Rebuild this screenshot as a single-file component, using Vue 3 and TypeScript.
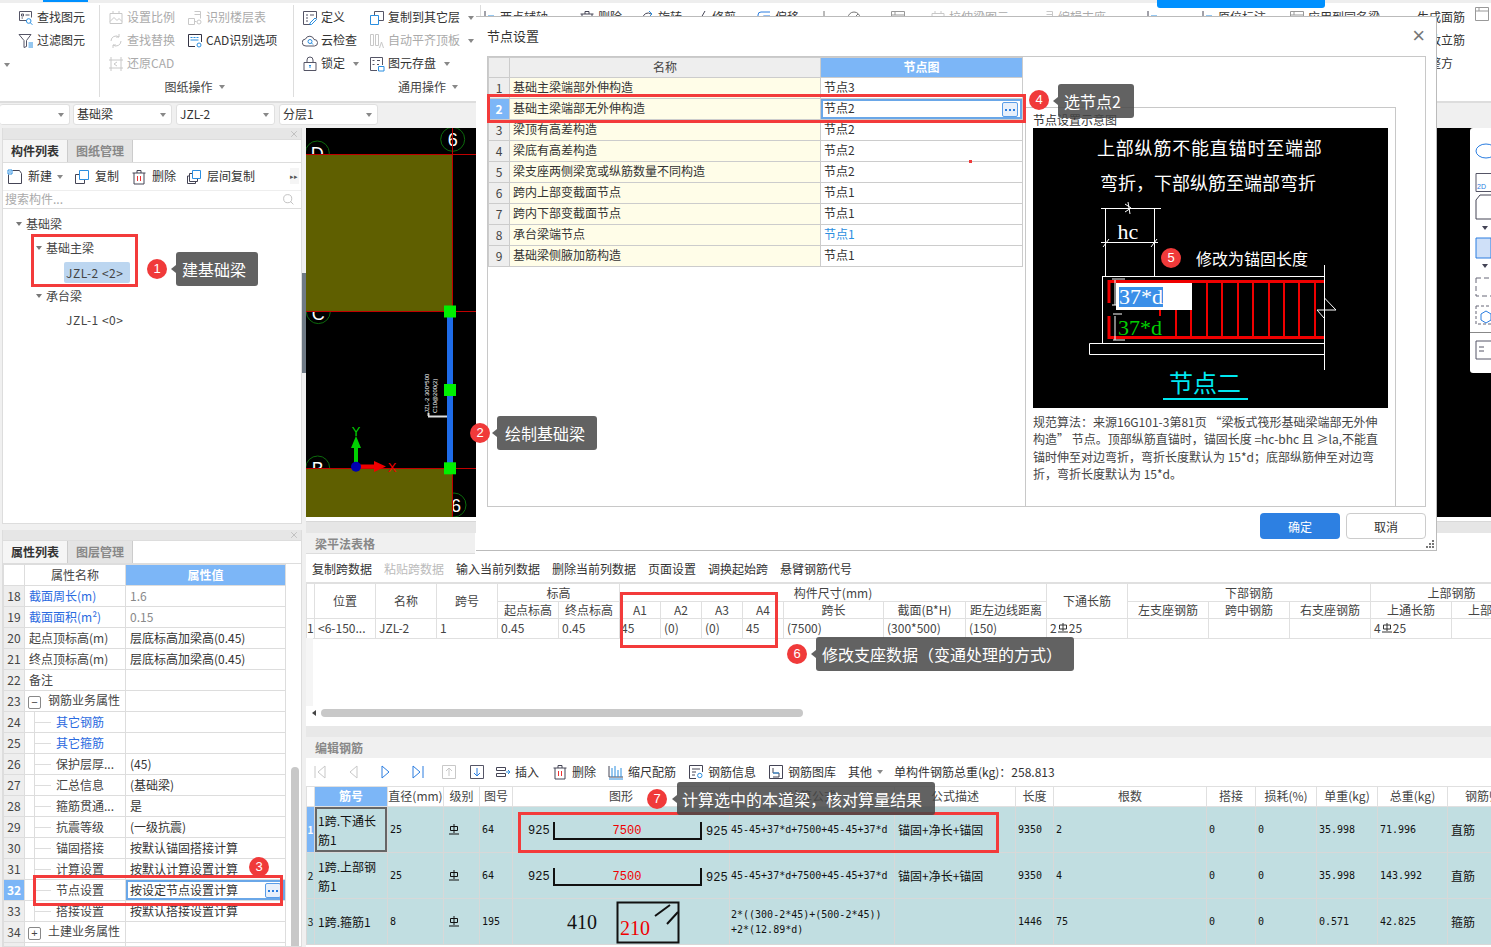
<script setup lang="ts">
import { h } from 'vue'
import type { FunctionalComponent } from 'vue'

const BOX = 'M1.5 1.5h13v13h-13z'
const ICONS: Record<string, string[]> = {
  find: ['#556|M8 10.5H1.5v-9h12v6', '#556|M3.5 4h2v2h-2zM3.5 8h1.5M7.5 5h4', '#2a8ee0|M13 11a2.3 2.3 0 1 1-4.6 0 2.3 2.3 0 0 1 4.6 0zM12.4 12.8l2 2'],
  filter: ['#556|M1 1.5h12L8.500 7.500v6L6 14.500v-7z', '#2a8ee0|M10.500 10h4.500M10.500 12h4.500M10.500 14h4.500'],
  scale: ['#c8c8c8|M2 3.500h12v10H2zM2 11.500l4-4 3 3 2-2 3 3M5 1v2.500M11 1v2.500'],
  floor: ['#c8c8c8|M1.500 8.500h6v6h-6zM7.500 1.500h6v7M7.500 4.500h6M7.500 11.500h2', '#c8c8c8|M14 12a2 2 0 1 1-4 0 2 2 0 0 1 4 0z'],
  replace: ['#c8c8c8|M3 8a5 5 0 0 1 8-4M13 8a5 5 0 0 1-8 4M11 1v3H8M5 15v-3h3'],
  cad: ['#334|M8 13.500H1.500v-12h13V9', '#2a8ee0|M3.500 4.500h2M6.500 4.500h2M9.500 4.500h2M3.500 7h8M14 12a2 2 0 1 1-4 0 2 2 0 0 1 4 0z'],
  restore: ['#c8c8c8|M3 1v14M1 4h14M1 12h14M13 1v14M9 6 6 8l3 2'],
  define: ['#556|M1.500 1.500h13v7M8 14.500H1.500v-13M4 5h2M8 5h4M4 8h2M4 11h2', '#2a8ee0|M8 13l5-5 1.500 1.500-5 5H8z'],
  copyl: ['#2a8ee0|M1.500 5.500h8v9h-8z', '#556|M5.500 5V1.500h9v9H10'],
  cloud: ['#556|M4 13a3.500 3.500 0 0 1-.500-7A4.500 4.500 0 0 1 12 6.500 3.200 3.200 0 0 1 12.500 13z', '#2a8ee0|M10 8.500a2 2 0 1 1-4 0 2 2 0 0 1 4 0zM9.500 10l1.500 1.500'],
  align: ['#c8c8c8|M1.500 1.500h3v11h-3zM6.500 1.500h3v11h-3zM10.500 15l2-6 2 6'],
  lock: ['#556|M2 6.500h12v8H2zM5 6.500V4a3 3 0 0 1 6 0v2.500', '#2a8ee0|M8 9v3M7 10l1-1 1 1'],
  store: ['#556|M8 14.500H1.500v-13h12V9M3.500 4.500h2M3.500 8.500h2M8 4.500h3M8 8.500h2', '#2a8ee0|M9.500 10.500h5.500v4.500H9.500z'],
  create: ['#445|M5.500 1.500h7l2 3v10h-13v-9', '#2a8ee0|M1 1h4v4H1zM2 3h2'],
  copy: ['#2a8ee0|M5.500 1.500h9v9h-9z', '#445|M5 5.500H1.500v9h9V11'],
  del: ['#445|M3 4v11h10V4M1.500 4h13M6 4V1.500h4V4', '#e33|M6.500 7v5M9.500 7v5'],
  fcopy: ['#2a8ee0|M6.500 1.500h8v8h-8z', '#445|M6 4.500H3.500v8h8V10M3 7H1.500v7.500h8V13'],
  search: ['#b5b5b5|M12 7a5 5 0 1 1-10 0 5 5 0 0 1 10 0zM10.500 10.500l3.500 3.500'],
  first: ['#c8c8c8|M3 2v12M13 2 6 8l7 6z'],
  prev: ['#c8c8c8|M11 2 4 8l7 6z'],
  next: ['#2a7de0|M5 2l7 6-7 6z'],
  last: ['#2a7de0|M3 2l7 6-7 6zM13 2v12'],
  upb: ['#c8c8c8|' + BOX + 'M8 12V4M5 7l3-3 3 3'],
  dnb: ['#556|' + BOX, '#2a7de0|M8 4v8M5 9l3 3 3-3'],
  ins: ['#445|M1.500 3.500h9v3h-9zM1.500 9.500h9v3h-9z', '#2a8ee0|M11 8h4M13 6l2 2-2 2'],
  bars: ['#445|M1 2v11h14', '#2a8ee0|M4 4v9M7 2v11M10 6v7M13 4v9M1 15h14'],
  info: ['#445|M8 14.500H1.500v-13h13V8M4 5h8M4 8h4M4 11h3', '#2a8ee0|M14 11.500a2.200 2.200 0 1 1-4.400 0 2.200 2.200 0 0 1 4.400 0z'],
  lib: ['#445|' + BOX + 'M5 4v5h6v4H5', '#2a8ee0|M5 9h6'],
  mark: ['#445|M4 1v12M1 13h14', '#2a8ee0|M7 6h6'],
  box: ['#999|' + BOX + 'M1.500 5h13M5 1.500V5'],
  rot: ['#445|M4 14V8a5 5 0 0 1 8-4', '#2a8ee0|M10 1l3 3-3 3'],
  trim: ['#445|M4 15 12 1M1 8h3'],
  off: ['#2a7de0|M14 2H5a3 3 0 0 0-3 3v9M14 6H8a2 2 0 0 0-2 2v6'],
  circ: ['#777|M14 8a6 6 0 1 1-12 0 6 6 0 0 1 12 0zM4 12l8-8'],
  tick: ['#777|M8 1v9M8 13v2'],
  close: ['#aaa|M3.500 3.500l9 9M12.500 3.500l-9 9']
}

const Ico: FunctionalComponent<{ n: string; s?: number }> = (p) =>
  h(
    'svg',
    { class: 'ico', width: p.s || 16, height: p.s || 16, viewBox: '0 0 16 16', fill: 'none' },
    (ICONS[p.n] || []).map((e) => {
      const [c, d] = e.split('|')
      return h('path', { d, stroke: c, 'stroke-width': 1 })
    })
  )

const topRest = [
  { w: 98, i: 'mark', t: '两点辅轴' },
  { w: 60, i: 'del', t: '删除' },
  { w: 54, i: 'rot', t: '旋转' },
  { w: 63, i: 'trim', t: '修剪' },
  { w: 60, i: 'off', t: '偏移' },
  { w: 30, i: 'tick', t: '' },
  { w: 44, i: 'circ', t: '' },
  { w: 40, i: 'box', t: '' },
  { w: 109, i: 'scale', t: '拉伸梁图元', g: true },
  { w: 105, i: 'floor', t: '编辑支座', g: true },
  { w: 55, i: 'mark', t: '' },
  { w: 90, i: 'mark', t: '原位标注' },
  { w: 103, i: 'box', t: '应用到同名梁' }
]

const tree = [
  { l: 0, t: '基础梁', caret: true },
  { l: 1, t: '基础主梁', caret: true },
  { l: 2, t: 'JZL-2 <2>', sel: true },
  { l: 1, t: '承台梁', caret: true },
  { l: 2, t: 'JZL-1 <0>' }
]

type Prop = { n: number; name: string; val?: string; blue?: boolean; gray?: boolean; child?: boolean; box?: string; sel?: boolean }
const props: Prop[] = [
  { n: 18, name: '截面周长(m)', val: '1.6', blue: true, gray: true },
  { n: 19, name: '截面面积(m²)', val: '0.15', blue: true, gray: true },
  { n: 20, name: '起点顶标高(m)', val: '层底标高加梁高(0.45)' },
  { n: 21, name: '终点顶标高(m)', val: '层底标高加梁高(0.45)' },
  { n: 22, name: '备注', val: '' },
  { n: 23, name: '钢筋业务属性', val: '', box: '−' },
  { n: 24, name: '其它钢筋', val: '', blue: true, child: true },
  { n: 25, name: '其它箍筋', val: '', blue: true, child: true },
  { n: 26, name: '保护层厚...', val: '(45)', child: true },
  { n: 27, name: '汇总信息', val: '(基础梁)', child: true },
  { n: 28, name: '箍筋贯通...', val: '是', child: true },
  { n: 29, name: '抗震等级', val: '(一级抗震)', child: true },
  { n: 30, name: '锚固搭接', val: '按默认锚固搭接计算', child: true },
  { n: 31, name: '计算设置', val: '按默认计算设置计算', child: true },
  { n: 32, name: '节点设置', val: '按设定节点设置计算', child: true, sel: true },
  { n: 33, name: '搭接设置', val: '按默认搭接设置计算', child: true },
  { n: 34, name: '土建业务属性', val: '', box: '+' },
  { n: 35, name: '显示样式', val: '', box: '+' }
]

const nodes = [
  ['基础主梁端部外伸构造', '节点3'],
  ['基础主梁端部无外伸构造', '节点2'],
  ['梁顶有高差构造', '节点2'],
  ['梁底有高差构造', '节点2'],
  ['梁支座两侧梁宽或纵筋数量不同构造', '节点2'],
  ['跨内上部变截面节点', '节点1'],
  ['跨内下部变截面节点', '节点1'],
  ['承台梁端节点', '节点1'],
  ['基础梁侧腋加筋构造', '节点1']
]

const pfCols = [8, 61, 61, 61, 61, 61, 41, 41, 41, 41, 100, 82, 81, 81, 81, 81, 81, 81, 81, 100]
const pfTools = ['复制跨数据', '粘贴跨数据', '输入当前列数据', '删除当前列数据', '页面设置', '调换起始跨', '悬臂钢筋代号']

const rbCols = [8, 73, 56, 36, 33, 217, 165, 121, 38, 153, 49, 61, 61, 70, 83]
const rbTools = [
  { w: 34, i: 'first' },
  { w: 31, i: 'prev' },
  { w: 33, i: 'next' },
  { w: 31, i: 'last' },
  { w: 28, i: 'upb' },
  { w: 26, i: 'dnb' },
  { w: 57, i: 'ins', t: '插入' },
  { w: 56, i: 'del', t: '删除' },
  { w: 80, i: 'bars', t: '缩尺配筋' },
  { w: 80, i: 'info', t: '钢筋信息' },
  { w: 80, i: 'lib', t: '钢筋图库' }
]
const rebars = [
  { no: 1, name: '1跨.下通长筋1', d: '25', code: '64', f: ['45-45+37*d+7500+45-45+37*d'], desc: '锚固+净长+锚固', len: '9350', cnt: '2', a: '0', b: '0', u: '35.998', t: '71.996', k: '直筋', shape: 'u' },
  { no: 2, name: '1跨.上部钢筋1', d: '25', code: '64', f: ['45-45+37*d+7500+45-45+37*d'], desc: '锚固+净长+锚固', len: '9350', cnt: '4', a: '0', b: '0', u: '35.998', t: '143.992', k: '直筋', shape: 'u' },
  { no: 3, name: '1跨.箍筋1', d: '8', code: '195', f: ['2*((300-2*45)+(500-2*45))', '+2*(12.89*d)'], desc: '', len: '1446', cnt: '75', a: '0', b: '0', u: '0.571', t: '42.825', k: '箍筋', shape: 'g' }
]

const stirrups = [127, 143, 158, 174, 189, 205, 220, 236, 251, 266, 282]

const overlays = [
  { x: 31, y: 234, w: 107, h: 53 },
  { x: 487, y: 94, w: 539, h: 29 },
  { x: 33, y: 875, w: 250, h: 31 },
  { x: 620, y: 592, w: 158, h: 56 },
  { x: 518, y: 812, w: 481, h: 41 }
]
const callouts = [
  { n: 1, x: 157, y: 269, tip: '建基础梁', tx: 176, ty: 252, tw: 82, th: 34, pl: 6 },
  { n: 2, x: 480, y: 433, tip: '绘制基础梁', tx: 497, ty: 416, tw: 100, th: 34, pl: 8 },
  { n: 3, x: 259, y: 867 },
  { n: 4, x: 1039, y: 100, tip: '选节点2', tx: 1058, ty: 84, tw: 76, th: 34, pl: 6 },
  { n: 5, x: 1171, y: 258 },
  { n: 6, x: 797, y: 654, tip: '修改支座数据（变通处理的方式）', tx: 816, ty: 637, tw: 258, th: 34, pl: 6 },
  { n: 7, x: 657, y: 799, tip: '计算选中的本道梁，核对算量结果', tx: 677, ty: 782, tw: 258, th: 33, pl: 5 }
]
</script>

<template>
  <div class="page">
    <header class="ribbon">
      <div class="g ga">
        <div class="ri"><Ico n="find" />查找图元</div>
        <div class="ri"><Ico n="filter" />过滤图元</div>
        <span class="tri ga-tri"></span>
      </div>
      <div class="g gb">
        <div class="cells">
          <div class="ri off"><Ico n="scale" />设置比例</div>
          <div class="ri off"><Ico n="floor" />识别楼层表</div>
          <div class="ri off"><Ico n="replace" />查找替换</div>
          <div class="ri"><Ico n="cad" />CAD识别选项</div>
          <div class="ri off"><Ico n="restore" />还原CAD</div>
        </div>
        <div class="glabel">图纸操作<span class="tri"></span></div>
      </div>
      <div class="g gc">
        <div class="cells">
          <div class="ri"><Ico n="define" />定义</div>
          <div class="ri"><Ico n="copyl" />复制到其它层<span class="tri"></span></div>
          <div class="ri"><Ico n="cloud" />云检查</div>
          <div class="ri off"><Ico n="align" />自动平齐顶板<span class="tri"></span></div>
          <div class="ri"><Ico n="lock" />锁定<span class="tri"></span></div>
          <div class="ri"><Ico n="store" />图元存盘<span class="tri"></span></div>
        </div>
        <div class="glabel">通用操作<span class="tri"></span></div>
      </div>
      <div class="rest">
        <div
          v-for="it in topRest"
          :key="it.w + it.i + it.t"
          class="ri"
          :class="{ off: it.g }"
          :style="{ width: it.w + 'px' }"
        >
          <Ico :n="it.i" />{{ it.t }}
        </div>
        <div class="restlast">
          <div class="ri">生成面筋</div>
          <div class="ri">查改立筋</div>
          <div class="ri">调整方</div>
        </div>
        <Ico n="box" class="resticon" />
      </div>
      <i class="blue-a"></i>
      <i class="blue-b"></i>
    </header>

    <div class="selects">
      <div class="sel s0"><span></span><i class="tri"></i></div>
      <div class="sel"><span>基础梁</span><i class="tri"></i></div>
      <div class="sel"><span>JZL-2</span><i class="tri"></i></div>
      <div class="sel"><span>分层1</span><i class="tri"></i></div>
    </div>

    <main class="work">
      <div class="leftcol">
        <section class="panel comp">
          <div class="phead"><Ico n="close" :s="10" class="x" /></div>
          <div class="tabs"><b class="tab on">构件列表</b><span class="tab">图纸管理</span></div>
          <div class="ctools">
            <span class="ct w67"><Ico n="create" />新建<i class="tri"></i></span>
            <span class="ct w57"><Ico n="copy" />复制</span>
            <span class="ct w55"><Ico n="del" />删除</span>
            <span class="ct"><Ico n="fcopy" />层间复制</span>
            <span class="moreside">▸▸</span>
          </div>
          <div class="csearch"><span>搜索构件...</span><Ico n="search" :s="13" /></div>
          <ul class="tree">
            <li v-for="t in tree" :key="t.t" :class="'lv' + t.l">
              <i v-if="t.caret" class="tri dark"></i>
              <span :class="{ picked: t.sel, code: t.l === 2 }">{{ t.t }}</span>
            </li>
          </ul>
        </section>

        <section class="panel prop">
          <div class="phead"><Ico n="close" :s="10" class="x" /></div>
          <div class="tabs"><b class="tab on">属性列表</b><span class="tab">图层管理</span></div>
          <div class="pbody">
            <table class="ptab">
              <colgroup>
                <col class="c21" />
                <col class="c101" />
                <col class="c160" />
              </colgroup>
              <thead>
                <tr>
                  <th></th>
                  <th>属性名称</th>
                  <th class="hl">属性值</th>
                </tr>
              </thead>
              <tbody>
                <tr v-for="p in props" :key="p.n">
                  <td class="num" :class="{ numsel: p.sel }">{{ p.n }}</td>
                  <td class="pname" :class="{ blue: p.blue, child: p.child }">
                    <i v-if="p.box" class="pm">{{ p.box }}</i>
                    <span>{{ p.name }}</span>
                  </td>
                  <td class="pval" :class="{ gray: p.gray, editing: p.sel }">
                    {{ p.val }}
                    <i v-if="p.sel" class="more"><u></u><u></u><u></u></i>
                  </td>
                </tr>
              </tbody>
            </table>
            <div class="pscroll"><i></i></div>
          </div>
        </section>
      </div>

      <div class="splitter"><i></i></div>

      <div class="rightcol">
        <div class="canvas">
          <svg class="cad" width="1185" height="389" viewBox="0 0 1185 389">
            <g fill="none" stroke="#0c6a0c">
              <circle cx="146.700" cy="11.300" r="12" />
              <circle cx="11.300" cy="25" r="12" />
              <circle cx="12.300" cy="183.600" r="12" />
              <circle cx="11.700" cy="340" r="12" />
              <circle cx="148" cy="377" r="12" />
            </g>
            <g fill="#fff" font-family="Liberation Sans, sans-serif" font-size="18" text-anchor="middle">
              <text x="146.700" y="18">6</text>
              <text x="11.300" y="32">D</text>
              <text x="12.300" y="192">C</text>
              <text x="11.700" y="347">B</text>
              <text x="150" y="384">6</text>
            </g>
            <rect x="0" y="26.300" width="146.700" height="157" fill="#5f5f00" />
            <rect x="0" y="340" width="146.700" height="49" fill="#5f5f00" />
            <g stroke="#c00000" fill="none">
              <path d="M0 26.500H171M0 183.500H171M0 340.500H171M146.500 0V389" />
            </g>
            <rect x="141" y="183" width="6" height="157" fill="#1e6be8" />
            <g fill="#00f000">
              <rect x="138" y="177.500" width="12" height="12" />
              <rect x="138" y="256" width="12" height="12" />
              <rect x="138" y="334.300" width="12" height="12" />
            </g>
            <path d="M122 288.500H141M122.500 285V288" stroke="#ddd" stroke-width="2" fill="none" />
            <g fill="#fff" font-family="Liberation Sans, sans-serif" font-size="6">
              <text transform="translate(123 285) rotate(-90)">JZL-2 300*500</text>
              <text transform="translate(131 285) rotate(-90)">C10@200(2)</text>
            </g>
            <path d="M50 336V318" stroke="#00d000" stroke-width="4" />
            <path d="M45 320 50 308 55 320z" fill="#00d000" />
            <path d="M50 338.500H70" stroke="#f00000" stroke-width="4" />
            <path d="M68 333 80 338.500 68 344z" fill="#f00000" />
            <circle cx="50" cy="338.700" r="5" fill="#0000b0" />
            <text x="50" y="308" fill="#00d000" font-size="13" text-anchor="middle" font-family="Liberation Sans, sans-serif">Y</text>
            <text x="86" y="344" fill="#f00000" font-size="13" text-anchor="middle" font-family="Liberation Sans, sans-serif">X</text>
          </svg>
          <div class="floatbar">
            <svg width="21" height="245" viewBox="0 0 21 245" fill="none" stroke="#2a7de0">
              <ellipse cx="16" cy="23" rx="10" ry="7" />
              <path d="M6 45.500H21M6 45.500V63.500H21" stroke="#556" />
              <text x="7" y="61" font-size="7" fill="#2a7de0" stroke="none" font-family="Liberation Sans, sans-serif">2D</text>
              <path d="M6 72V91H21M6 72l4-5H21" stroke="#445" />
              <path d="M12 98l3 4 3-4z" fill="#445" stroke="none" />
              <path d="M6 110V130H21V110H10z" fill="#cfe0f8" />
              <path d="M12 136l3 4 3-4z" fill="#445" stroke="none" />
              <path d="M6 150V168H21M6 150H21" stroke="#667" stroke-dasharray="5 3" />
              <path d="M6 178V196H21M6 178H21" stroke="#667" stroke-dasharray="3 2" />
              <path d="M11 186l5-3 5 3v6l-5 3-5-3z" />
              <path d="M0 204.500H21" stroke="#888" />
              <path d="M6 213V231H21M6 213H21M9 219h5M9 223h5" stroke="#556" />
            </svg>
          </div>
        </div>
        <div class="band"></div>

        <section class="pf">
          <div class="pftitle"><span>梁平法表格</span></div>
          <div class="pftools">
            <span v-for="(t, i) in pfTools" :key="t" :class="{ dis: i === 1 }">{{ t }}</span>
          </div>
          <div class="pfbody">
            <table class="pftab">
              <colgroup>
                <col v-for="(w, i) in pfCols" :key="i" :style="{ width: w + 'px' }" />
              </colgroup>
              <thead>
                <tr class="r18">
                  <th rowspan="2"></th>
                  <th rowspan="2">位置</th>
                  <th rowspan="2">名称</th>
                  <th rowspan="2">跨号</th>
                  <th colspan="2">标高</th>
                  <th colspan="7">构件尺寸(mm)</th>
                  <th rowspan="2">下通长筋</th>
                  <th colspan="3">下部钢筋</th>
                  <th colspan="2">上部钢筋</th>
                </tr>
                <tr class="r17">
                  <th>起点标高</th>
                  <th>终点标高</th>
                  <th>A1</th>
                  <th>A2</th>
                  <th>A3</th>
                  <th>A4</th>
                  <th>跨长</th>
                  <th>截面(B*H)</th>
                  <th>距左边线距离</th>
                  <th>左支座钢筋</th>
                  <th>跨中钢筋</th>
                  <th>右支座钢筋</th>
                  <th>上通长筋</th>
                  <th>上部钢筋</th>
                </tr>
              </thead>
              <tbody>
                <tr class="r20">
                  <td class="mini">1</td>
                  <td>&lt;6-150...</td>
                  <td>JZL-2</td>
                  <td>1</td>
                  <td>0.45</td>
                  <td>0.45</td>
                  <td class="tight">45</td>
                  <td>(0)</td>
                  <td>(0)</td>
                  <td>45</td>
                  <td>(7500)</td>
                  <td>(300*500)</td>
                  <td>(150)</td>
                  <td>2<svg class="rb" width="10" height="10" viewBox="0 0 10 10"><path d="M1.500 2h7v4h-7zM5 0v8M0 9h10" fill="none" stroke="#333" /></svg>25</td>
                  <td></td>
                  <td></td>
                  <td></td>
                  <td>4<svg class="rb" width="10" height="10" viewBox="0 0 10 10"><path d="M1.500 2h7v4h-7zM5 0v8M0 9h10" fill="none" stroke="#333" /></svg>25</td>
                  <td></td>
                </tr>
              </tbody>
            </table>
            <div class="pfblank"></div>
            <div class="hscroll"><i class="arrow"></i><i class="thumb"></i></div>
          </div>
        </section>

        <div class="band2"></div>

        <section class="rb-panel">
          <div class="rbtitle">编辑钢筋</div>
          <div class="rbtools">
            <span v-for="t in rbTools" :key="t.i" class="rbt" :style="{ width: t.w + 'px' }"><Ico :n="t.i" />{{ t.t }}</span>
            <span class="rbother">其他<i class="tri"></i></span>
            <span>单构件钢筋总重(kg)：258.813</span>
          </div>
          <table class="rbtab">
            <colgroup>
              <col v-for="(w, i) in rbCols" :key="i" :style="{ width: w + 'px' }" />
            </colgroup>
            <thead>
              <tr>
                <th></th>
                <th class="hl">筋号</th>
                <th>直径(mm)</th>
                <th>级别</th>
                <th>图号</th>
                <th>图形</th>
                <th>计算公式</th>
                <th>公式描述</th>
                <th>长度</th>
                <th>根数</th>
                <th>搭接</th>
                <th>损耗(%)</th>
                <th>单重(kg)</th>
                <th>总重(kg)</th>
                <th>钢筋归类</th>
              </tr>
            </thead>
            <tbody>
              <tr v-for="r in rebars" :key="r.no">
                <td class="rno" :class="{ rnosel: r.no === 1 }">{{ r.no }}</td>
                <td class="rname" :class="{ active: r.no === 1 }">{{ r.name }}</td>
                <td>{{ r.d }}</td>
                <td class="rc">
                  <svg width="10" height="11" viewBox="0 0 10 11"><path d="M1.500 2.500h7v4h-7zM5 0v9M0 10h10" fill="none" stroke="#111" /></svg>
                </td>
                <td>{{ r.code }}</td>
                <td class="fig">
                  <svg v-if="r.shape === 'u'" width="217" height="45" viewBox="0 0 217 45">
                    <text x="15" y="27" class="t12">925</text>
                    <path d="M41 15V32H188V15" fill="none" stroke="#111" stroke-width="2" />
                    <text x="114" y="27" class="t12 red" text-anchor="middle">7500</text>
                    <text x="193" y="28" class="t12">925</text>
                  </svg>
                  <svg v-else width="217" height="45" viewBox="0 0 217 45">
                    <text x="54" y="30" class="t18">410</text>
                    <rect x="104.500" y="3.500" width="61" height="40" fill="none" stroke="#111" stroke-width="2" />
                    <text x="107" y="36" class="t18 red">210</text>
                    <path d="M142 17 157 6M154 25 165 13" stroke="#111" stroke-width="2" />
                  </svg>
                </td>
                <td class="form"><div v-for="l in r.f" :key="l">{{ l }}</div></td>
                <td class="cjk">{{ r.desc }}</td>
                <td>{{ r.len }}</td>
                <td>{{ r.cnt }}</td>
                <td>{{ r.a }}</td>
                <td>{{ r.b }}</td>
                <td>{{ r.u }}</td>
                <td>{{ r.t }}</td>
                <td class="cjk">{{ r.k }}</td>
              </tr>
            </tbody>
          </table>
        </section>
      </div>
    </main>

    <div class="dialog">
      <div class="dtitle"><span>节点设置</span><span class="dclose">×</span></div>
      <div class="dpanel">
        <div class="dleft">
          <table class="ntab">
            <colgroup>
              <col class="c21" />
              <col class="c311" />
              <col class="c202" />
            </colgroup>
            <thead>
              <tr>
                <th></th>
                <th>名称</th>
                <th class="hl">节点图</th>
              </tr>
            </thead>
            <tbody>
              <tr v-for="(r, i) in nodes" :key="r[0]">
                <td class="num" :class="{ numsel: i === 1 }">{{ i + 1 }}</td>
                <td class="nname">{{ r[0] }}</td>
                <td class="nval" :class="{ editing: i === 1, link: i === 7 }">
                  {{ r[1] }}
                  <i v-if="i === 1" class="more"><u></u><u></u><u></u></i>
                  <i v-if="i === 3" class="reddot"></i>
                </td>
              </tr>
            </tbody>
          </table>
        </div>
        <div class="dgroup">
          <div class="dglabel">节点设置示意图</div>
          <svg class="node" width="355" height="280" viewBox="0 0 355 280">
            <rect width="355" height="280" fill="#000" />
            <g fill="#fff" font-size="18" font-family="Noto Sans CJK SC, sans-serif">
              <text x="64" y="27" letter-spacing="0.8">上部纵筋不能直锚时至端部</text>
              <text x="67" y="62">弯折，下部纵筋至端部弯折</text>
            </g>
            <g stroke="#fff" fill="none">
              <path d="M68 80.500H128M72.500 80V148M121.500 80V148M68 114.500H125" />
              <path d="M95 74 97 86M70 119l6-8M118 119l6-8M92 76l6 4-6 4" />
              <path d="M69.500 148.500H291.500M69.500 148V215.500M56.500 215.500H291.500V226.500H56.500zM291.500 137V242" />
              <path d="M284 182H303L291.500 170M284 182 291 190" />
            </g>
            <text x="95" y="111" fill="#fff" font-size="22" font-family="Liberation Serif, serif" text-anchor="middle">hc</text>
            <g stroke="#f00000" fill="none">
              <path d="M76 175V153.500H291M76 188V209.500H291" stroke-width="3" />
              <path
                v-for="x in stirrups"
                :key="x"
                :d="'M' + x + ' 153V209'"
                stroke-width="2"
              />
            </g>
            <path d="M79 151H92M82 152V177M79 177H90M82 188V212M80 212H92M80 186h9" stroke="#fff" fill="none" />
            <rect x="83" y="155" width="76" height="27" fill="#fff" />
            <rect x="86" y="159" width="44" height="20" fill="#3b8fe8" />
            <text x="86" y="176" fill="#fff" font-size="22" font-family="Liberation Serif, serif">37*d</text>
            <rect x="84" y="188" width="44" height="20" fill="#000" />
            <text x="85" y="207" fill="#00d000" font-size="22" font-family="Liberation Serif, serif">37*d</text>
            <text x="163" y="137" fill="#fff" font-size="16" font-family="Noto Sans CJK SC, sans-serif">修改为锚固长度</text>
            <text x="136" y="264" fill="#00e8f0" font-size="24" font-family="Noto Sans CJK SC, sans-serif">节点二</text>
            <path d="M130 271H215" stroke="#00e8f0" stroke-width="2" />
          </svg>
          <p class="dnote">规范算法：来源16G101-3第81页 “梁板式筏形基础梁端部无外伸构造” 节点。顶部纵筋直锚时，锚固长度 =hc-bhc 且 ≥la,不能直锚时伸至对边弯折，弯折长度默认为 15*d；底部纵筋伸至对边弯折，弯折长度默认为 15*d。</p>
        </div>
      </div>
      <div class="dbtns">
        <button class="ok" type="button">确定</button>
        <button class="cancel" type="button">取消</button>
      </div>
      <svg class="grip" width="9" height="9" viewBox="0 0 9 9"><path d="M6 0h2v2H6zM3 3h2v2H3zM6 3h2v2H6zM0 6h2v2H0zM3 6h2v2H3zM6 6h2v2H6z" fill="#777" /></svg>
    </div>

    <i
      v-for="(o, i) in overlays"
      :key="'o' + i"
      class="redbox"
      :style="{ left: o.x + 'px', top: o.y + 'px', width: o.w + 'px', height: o.h + 'px' }"
    ></i>
    <template v-for="c in callouts" :key="'c' + c.n">
      <span class="badge" :style="{ left: c.x - 10 + 'px', top: c.y - 10 + 'px' }">{{ c.n }}</span>
      <span
        v-if="c.tip"
        class="tip"
        :style="{ left: c.tx + 'px', top: c.ty + 'px', width: c.tw + 'px', height: c.th + 'px', paddingLeft: c.pl + 'px' }"
      >{{ c.tip }}</span>
    </template>
  </div>
</template>

<style scoped>
.page {
  position: relative;
  width: 1491px;
  height: 947px;
  overflow: hidden;
  background: #f0f0f0;
  font: 12px/1.2 "Noto Sans CJK SC", "Liberation Sans", sans-serif;
  color: #333;
}
.ico { flex: none; display: block; }
.tri {
  display: inline-block;
  width: 0;
  height: 0;
  border: 3.5px solid transparent;
  border-top: 4px solid #888;
  border-bottom: 0;
  flex: none;
}
.tri.dark { border-top-color: #777; }

.ribbon {
  position: relative;
  display: flex;
  height: 103px;
  box-sizing: border-box;
  background: #fff;
  border-bottom: 2px solid #ddd;
  border-top: 3px solid #eee;
}
.blue-a { position: absolute; left: 43px; top: -3px; width: 45px; height: 2px; background: #0090ff; }
.blue-b { position: absolute; left: 1157px; top: -3px; width: 168px; height: 8px; background: #0090ff; border-radius: 0 0 3px 3px; }
.g {
  position: relative;
  box-sizing: border-box;
  height: 92px;
  margin-top: 2px;
  padding-top: 1px;
  border-right: 1px solid #ddd;
  flex: none;
}
.ri { display: flex; align-items: center; gap: 3px; height: 23px; white-space: nowrap; }
.ri .tri { margin-left: 5px; }
.ri.off { color: #aaa; }
.ga { width: 100px; padding-left: 18px; }
.ga-tri { position: absolute; left: 4px; top: 58px; }
.gb { width: 194px; padding-left: 8px; }
.gb .cells { display: grid; grid-template-columns: 79px 1fr; grid-auto-rows: 23px; height: 71px; }
.gc { width: 187px; padding-left: 8px; }
.gc .cells { display: grid; grid-template-columns: 67px 1fr; grid-auto-rows: 23px; height: 71px; }
.glabel { display: flex; align-items: center; justify-content: center; gap: 6px; height: 20px; margin-left: -12px; color: #444; }
.gc .glabel { padding-left: 86px; }
.rest { position: relative; display: flex; flex: none; padding-top: 3px; }
.rest > .ri { flex: none; }
.restlast { width: 57px; margin-left: 25px; }

.selects { display: flex; gap: 4px; height: 25px; padding: 1px 0 0; box-sizing: border-box; }
.sel {
  box-sizing: border-box;
  display: flex;
  align-items: center;
  justify-content: space-between;
  width: 99px;
  height: 21px;
  padding: 0 5px 0 3px;
  background: #fff;
  border: 1px solid #e0e0e0;
  border-radius: 3px;
}
.sel.s0 { width: 70px; border-left: 0; margin-right: -1px; }

.work { display: flex; height: 819px; }
.leftcol { width: 300px; margin-left: 2px; flex: none; display: flex; flex-direction: column; gap: 6px; }
.panel { box-sizing: border-box; background: #fff; border: 1px solid #ddd; border-top: 0; overflow: hidden; }
.comp { height: 396px; }
.prop { height: 417px; }
.phead { display: flex; justify-content: flex-end; align-items: center; height: 10px; background: #e6e6e6; border-bottom: 1px solid #ddd; }
.comp .phead { height: 11px; }
.x { margin-right: 2px; }
.tabs { display: flex; height: 22px; border-bottom: 1px solid #ddd; background: #fff; }
.tab { box-sizing: border-box; width: 65px; line-height: 22px; text-align: center; background: #e4e4e4; color: #888; font-weight: 700; border-right: 1px solid #ccc; }
.tab.on { background: #f5f5f5; color: #333; }

.ctools { position: relative; display: flex; align-items: center; height: 27px; padding-left: 4px; border-bottom: 1px solid #eee; }
.ct { display: flex; align-items: center; gap: 5px; flex: none; }
.w67 { width: 67px; }
.w57 { width: 57px; }
.w55 { width: 55px; }
.moreside { position: absolute; right: 2px; top: 5px; width: 9px; font-size: 7px; line-height: 16px; color: #555; background: #f5f5f5; }
.csearch { display: flex; align-items: center; justify-content: space-between; height: 17px; padding: 0 6px 0 2px; border-bottom: 1px solid #ddd; color: #aaa; }
.tree { list-style: none; margin: 0; padding: 3px 0 0; }
.tree li { display: flex; align-items: center; height: 24px; gap: 4px; color: #444; }
.lv0 { padding-left: 13px; }
.lv1 { padding-left: 33px; }
.lv2 { padding-left: 61px; }
.code { letter-spacing: 0.5px; padding-left: 2px; }
.picked { display: block; width: 66px; line-height: 21px; background: #bcd6f0; border-radius: 2px; box-sizing: border-box; }

.pbody { display: flex; }
table { border-collapse: collapse; table-layout: fixed; }
.c21 { width: 21px; }
.c101 { width: 101px; }
.c160 { width: 160px; }
.c311 { width: 311px; }
.c202 { width: 202px; }
.ptab { width: 282px; flex: none; }
.ptab th { height: 20px; padding: 0; font-weight: 400; border: 1px solid #ddd; background: #fff; color: #444; }
.ptab td { height: 20px; padding: 0 4px; border: 1px solid #ddd; white-space: nowrap; position: relative; }
.num { background: #eee; text-align: center; padding: 0 !important; color: #444; }
.numsel { background: #7cb6f7; color: #fff; font-weight: 700; }
.pname { color: #444; }
.pname.blue { color: #2a6ae0; }
.pname.child { padding-left: 31px; }
.pname.child::before { content: ""; position: absolute; left: 9px; top: 0; bottom: 0; border-left: 1px solid #ddd; }
.pname.child::after { content: ""; position: absolute; left: 10px; top: 50%; width: 16px; border-top: 1px solid #ddd; }
.pval.gray { color: #888; }
.pm { display: inline-block; width: 11px; height: 11px; margin: 0 7px 0 -1px; border: 1px solid #888; border-radius: 2px; font: 11px/10px "Liberation Sans", sans-serif; text-align: center; vertical-align: -1px; }
.editing { box-shadow: inset 0 0 0 2px #6aa7e8; }
.more { position: absolute; right: 4px; top: 3px; display: flex; align-items: center; justify-content: center; gap: 2px; width: 14px; height: 13px; border: 1px solid #5a9de8; border-radius: 2px; background: #e8f0fb; }
.more u { width: 2px; height: 2px; background: #2a7de0; }
.pscroll { position: relative; flex: 1; }
.pscroll i { position: absolute; left: 5px; top: 203px; width: 8px; height: 200px; border-radius: 4px; background: #c8c8c8; }

.splitter { width: 4px; flex: none; position: relative; }
.splitter i { position: absolute; left: 0; top: 145px; width: 4px; height: 100px; background: #6f7a85; }

.rightcol { width: 1185px; flex: none; background: #fff; }
.canvas { position: relative; height: 389px; background: #000; overflow: hidden; }
.cad { display: block; }
.floatbar { position: absolute; right: 0; top: 0; width: 21px; height: 245px; background: #fff; border-radius: 3px 0 0 3px; }
.floatbar svg { display: block; }
.band { height: 12px; margin-top: 4px; background: #e6e6e6; border-top: 1px solid #d8d8d8; box-sizing: border-box; }

.pf { height: 187px; }
.pftitle { height: 22px; }
.pftitle span { display: block; width: 169px; height: 21px; padding-left: 9px; box-sizing: border-box; line-height: 21px; background: #f0f0f0; color: #888; font-weight: 700; border-bottom: 1px solid #ddd; }
.pftools { display: flex; align-items: center; gap: 12px; height: 28px; padding: 2px 0 0 6px; border-bottom: 1px solid #e0e0e0; box-sizing: border-box; }
.dis { color: #bbb; }
.pfbody { position: relative; height: 137px; overflow: hidden; }
.pftab { width: 1244px; color: #444; }
.pftab th, .pftab td { border: 1px solid #e0e0e0; padding: 0 3px; font-weight: 400; white-space: nowrap; overflow: hidden; }
.pftab th { text-align: center; padding: 0; }
.r18 th { height: 17px; line-height: 14px; }
.r17 th { height: 16px; line-height: 14px; }
.r20 td { height: 19px; }
.mini { padding: 0 !important; }
.tight { padding-left: 1px !important; }
.rb { vertical-align: 0; margin: 0 1px; }
.pfblank { position: absolute; left: 0; top: 55px; width: 7px; bottom: 14px; background: #f5f5f5; }
.hscroll { position: absolute; left: 0; right: 0; bottom: 0; height: 14px; }
.arrow { position: absolute; left: 6px; top: 4px; border: 3.5px solid transparent; border-right: 4px solid #444; border-left: 0; }
.thumb { position: absolute; left: 15px; top: 3px; width: 482px; height: 8px; background: #c8c8c8; border-radius: 4px; }

.band2 { height: 11px; margin-top: 6px; background: #e8e8e8; }
.rb-panel { height: 210px; overflow: hidden; }
.rbtitle { height: 21px; line-height: 21px; padding-left: 9px; background: #f0f0f0; color: #888; font-weight: 700; }
.rbtools { display: flex; align-items: center; height: 28px; padding-left: 6px; box-sizing: border-box; }
.rbt { display: flex; align-items: center; gap: 4px; flex: none; }
.rbother { display: flex; align-items: center; gap: 5px; width: 46px; flex: none; }
.rbtab { width: 1224px; }
.rbtab th { height: 19px; padding: 0; font-weight: 400; color: #444; border: 1px solid #e0e0e0; white-space: nowrap; overflow: hidden; }
.rbtab td { height: 45px; padding: 0 2px; background: #c1dee1; border: 1px solid #d8d8d8; font: 10px/15px "DejaVu Sans Mono", monospace; color: #111; overflow: hidden; }
.rbtab td.rno { padding: 0; text-align: center; font: 10px "Noto Sans CJK SC", sans-serif; }
.rbtab td.rnosel { background: #7cb6f7; color: #fff; font-weight: 700; }
.rbtab td.rname { padding: 0 3px; font: 12px/19px "Noto Sans CJK SC", sans-serif; }
.rbtab td.active { box-shadow: inset 0 0 0 2px #666; }
.rbtab td.cjk { padding: 0 3px; font: 12px/15px "Noto Sans CJK SC", sans-serif; }
.rbtab td.rc { padding-left: 5px; }
.rbtab td.rc svg { display: block; }
.rbtab td.fig { padding: 0; }
.rbtab td.fig svg { display: block; }
.rbtab td.form { padding: 0 1px; white-space: nowrap; }
.t12 { font: 12px "Liberation Mono", monospace; fill: #111; }
.t18 { font: 20px "Liberation Serif", serif; fill: #111; }
.red { fill: #f00000; }

.dialog {
  position: absolute;
  left: 476px;
  top: 16px;
  width: 961px;
  height: 535px;
  box-sizing: border-box;
  background: #fff;
  border: 1px solid #bbb;
  border-width: 1px 1px 1px 0;
  z-index: 2;
  padding: 0 10px 0 11px;
}
.dtitle { display: flex; justify-content: space-between; align-items: center; height: 37px; padding-bottom: 2px; font-size: 13px; color: #333; }
.dclose { margin-right: 1px; font: 22px/1 "Liberation Sans", sans-serif; color: #777; }
.dpanel { display: flex; box-sizing: border-box; height: 451px; width: 939px; padding-right: 29px; border: 1px solid #c8c8c8; }
.dleft { width: 537px; flex: none; }
.ntab { width: 534px; }
.ntab th { height: 19px; padding: 0; font-weight: 400; background: #eee; color: #444; border: 1px solid #ccc; }
.ntab td { position: relative; height: 19px; padding: 0 3px 1px; border: 1px solid #ccc; white-space: nowrap; }
.nname { background: #fffde8; color: #333; }
.nval { color: #333; }
.nval.link { color: #2a8ee0; }
.reddot { position: absolute; left: 148px; top: 19px; width: 3px; height: 3px; background: #f03a3a; }
.dgroup { box-sizing: border-box; width: 371px; height: 400px; margin-top: 50px; padding: 0 7px; border: 1px solid #c8c8c8; border-bottom: 0; }
.dglabel { height: 20px; line-height: 24px; color: #333; }
.node { display: block; }
.dnote { margin: 5px 0 0; width: 350px; font-size: 12px; line-height: 17.300px; color: #444; }
.dbtns { display: flex; justify-content: flex-end; gap: 6px; margin-top: 6px; }
.dbtns button { box-sizing: border-box; width: 80px; height: 26px; border-radius: 4px; font: 12px "Noto Sans CJK SC", sans-serif; }
.ok { background: #2d80e2; color: #fff; border: 0; }
.cancel { background: #fff; color: #333; border: 1px solid #ccc; }
.grip { position: absolute; right: 1px; bottom: 1px; }

.redbox { position: absolute; box-sizing: border-box; border: 3px solid #f33b3b; z-index: 3; pointer-events: none; }
.badge {
  position: absolute;
  z-index: 4;
  width: 20px;
  height: 20px;
  border-radius: 50%;
  background: #f03a3a;
  color: #fff;
  text-align: center;
  font: 13px/20px "Liberation Sans", sans-serif;
}
.tip {
  position: absolute;
  z-index: 4;
  box-sizing: border-box;
  border-radius: 3px;
  background: rgba(70, 70, 70, 0.85);
  color: #fff;
  font-size: 16px;
  line-height: 34px;
  white-space: nowrap;
}
.tip::before {
  content: "";
  position: absolute;
  left: -5px;
  top: 13px;
  border: 4px solid transparent;
  border-right: 5px solid rgba(70, 70, 70, 0.85);
  border-left: 0;
}
th.hl, .ptab th.hl, .ntab th.hl, .rbtab th.hl { background: #7cb6f7; color: #fff; font-weight: 700; }
</style>

<style>
html, body { margin: 0; overflow: hidden; background: #f0f0f0; }
</style>
